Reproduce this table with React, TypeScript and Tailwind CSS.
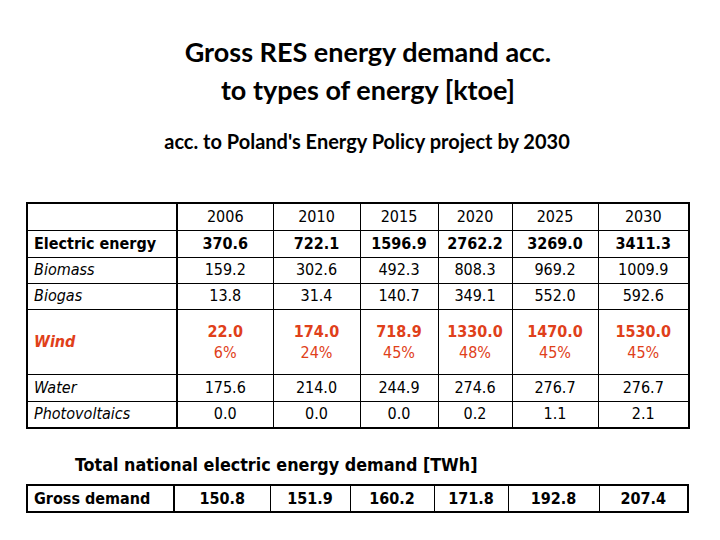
import React from "react";

const years = ["2006", "2010", "2015", "2020", "2025", "2030"];

const electric = ["370.6", "722.1", "1596.9", "2762.2", "3269.0", "3411.3"];

const plainRows: { label: string; values: string[] }[] = [
  { label: "Biomass", values: ["159.2", "302.6", "492.3", "808.3", "969.2", "1009.9"] },
  { label: "Biogas", values: ["13.8", "31.4", "140.7", "349.1", "552.0", "592.6"] },
];

const wind = [
  ["22.0", "6%"],
  ["174.0", "24%"],
  ["718.9", "45%"],
  ["1330.0", "48%"],
  ["1470.0", "45%"],
  ["1530.0", "45%"],
];

const lowerRows: { label: string; values: string[] }[] = [
  { label: "Water", values: ["175.6", "214.0", "244.9", "274.6", "276.7", "276.7"] },
  { label: "Photovoltaics", values: ["0.0", "0.0", "0.0", "0.2", "1.1", "2.1"] },
];

const gross = ["150.8", "151.9", "160.2", "171.8", "192.8", "207.4"];

const tableFont = { fontFamily: '"DejaVu Sans Condensed", "DejaVu Sans", sans-serif' };

export default function App() {
  return (
    <div className="w-[720px] h-[540px] bg-white text-black overflow-hidden">
      {/* Titles */}
      <div
        className="pt-[33px] text-center font-bold text-[27px] leading-[38px] pl-[16px]"
        style={{ fontFamily: "Lato, sans-serif" }}
      >
        <div>Gross RES energy demand acc.</div>
        <div>to types of energy [ktoe]</div>
      </div>
      <div
        className="mt-[19px] text-center font-bold text-[20px] leading-[26px] pl-[14px]"
        style={{ fontFamily: "Lato, sans-serif" }}
      >
        acc. to Poland's Energy Policy project by 2030
      </div>

      {/* Main table */}
      <table
        className="ml-[26px] mt-[48px] w-[662px] table-fixed border-collapse border-2 border-black text-[16px]"
        style={tableFont}
      >
        <colgroup>
          <col className="w-[150px]" />
          <col className="w-[96px]" />
          <col className="w-[87px]" />
          <col className="w-[78px]" />
          <col className="w-[74px]" />
          <col className="w-[86px]" />
          <col className="w-[91px]" />
        </colgroup>
        <tbody>
          <tr className="h-[27px]">
            <td className="border border-black border-r-2" />
            {years.map((y) => (
              <td key={y} className="border border-black text-center">
                {y}
              </td>
            ))}
          </tr>
          <tr className="h-[27px]">
            <td className="border border-black border-r-2 pl-[6px] font-bold">Electric energy</td>
            {electric.map((v) => (
              <td key={v} className="border border-black text-center font-bold">
                {v}
              </td>
            ))}
          </tr>
          {plainRows.map((r) => (
            <tr key={r.label} className="h-[26px]">
              <td className="border border-black border-r-2 pl-[6px] italic">{r.label}</td>
              {r.values.map((v, i) => (
                <td key={i} className="border border-black text-center">
                  {v}
                </td>
              ))}
            </tr>
          ))}
          <tr className="h-[65px] text-[#e0401a]">
            <td className="border border-black border-r-2 pl-[6px] font-bold italic">Wind</td>
            {wind.map(([v, p], i) => (
              <td key={i} className="border border-black text-center leading-[21px]">
                <div className="font-bold">{v}</div>
                <div>{p}</div>
              </td>
            ))}
          </tr>
          {lowerRows.map((r) => (
            <tr key={r.label} className="h-[27px]">
              <td className="border border-black border-r-2 pl-[6px] italic">{r.label}</td>
              {r.values.map((v, i) => (
                <td key={i} className="border border-black text-center">
                  {v}
                </td>
              ))}
            </tr>
          ))}
        </tbody>
      </table>

      {/* Electric demand */}
      <div className="pl-[75px] mt-[24px] font-bold text-[17.8px] leading-[24px]" style={tableFont}>
        Total national electric energy demand [TWh]
      </div>
      <table
        className="ml-[26px] mt-[7px] w-[661px] table-fixed border-collapse border-2 border-black text-[16px] font-bold"
        style={tableFont}
      >
        <colgroup>
          <col className="w-[147px]" />
          <col className="w-[96px]" />
          <col className="w-[80px]" />
          <col className="w-[84px]" />
          <col className="w-[74px]" />
          <col className="w-[91px]" />
          <col className="w-[89px]" />
        </colgroup>
        <tbody>
          <tr className="h-[27px]">
            <td className="border border-black border-r-2 pl-[6px]">Gross demand</td>
            {gross.map((v) => (
              <td key={v} className="border border-black text-center">
                {v}
              </td>
            ))}
          </tr>
        </tbody>
      </table>
    </div>
  );
}
